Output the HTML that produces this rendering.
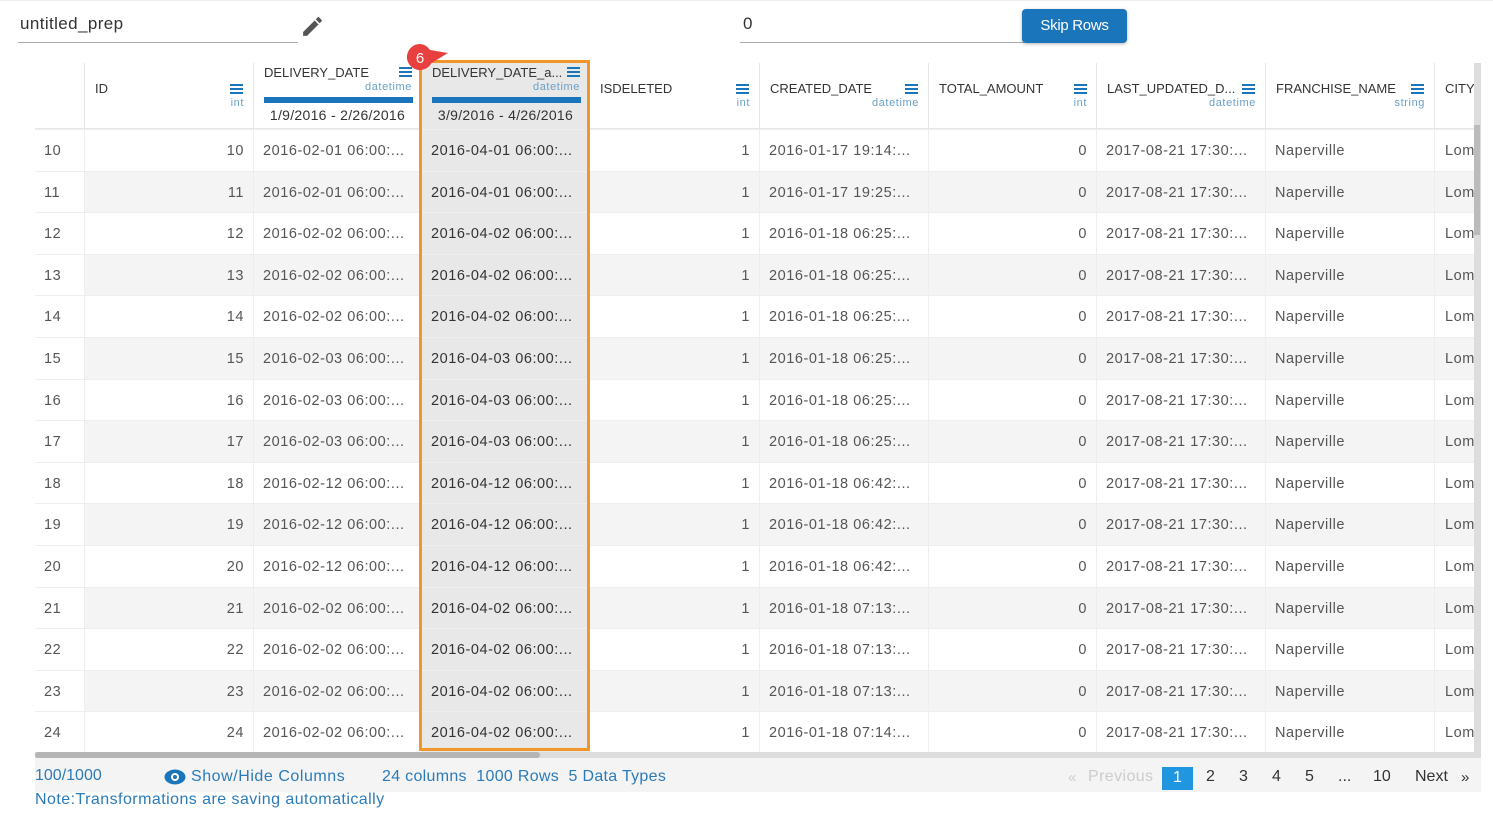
<!DOCTYPE html><html><head><style>
*{box-sizing:border-box;margin:0;padding:0}
body{width:1493px;height:820px;background:#fff;font-family:"Liberation Sans",sans-serif;position:relative;overflow:hidden;color:#555}
.a{position:absolute}
.hd{position:absolute;top:63px;height:67px;border-right:1px solid #e6e6e6;background:#fff}
.hn{position:absolute;left:10px;top:2px;font-size:13px;color:#333;white-space:nowrap}
.ham{position:absolute;width:13px;height:10px;border-top:2px solid #1b75bb;border-bottom:2px solid #1b75bb}
.ham:after{content:"";position:absolute;left:0;right:0;top:2px;border-top:2px solid #1b75bb}
.ty{position:absolute;right:9px;font-size:11px;color:#6aa0c8;letter-spacing:.6px}
.row{position:absolute;left:35px;width:1440px;height:41.6px;border-bottom:1px solid #eee;font-size:14.5px;color:#555}
.c{position:absolute;top:0;height:100%;line-height:43px;border-right:1px solid #eee;white-space:nowrap;overflow:hidden;padding:0 9px;letter-spacing:.55px}
.r{text-align:right}
</style></head><body>
<div class="a" style="left:0;top:0;width:1493px;height:1px;background:#eee"></div>
<div class="a" style="left:20px;top:14px;font-size:17px;color:#333;letter-spacing:.4px">untitled_prep</div>
<div class="a" style="left:18px;top:42px;width:280px;height:1px;background:#aaa"></div>
<svg class="a" style="left:300px;top:14px" width="25" height="25" viewBox="0 0 24 24"><path fill="#555" d="M3 17.25V21h3.75L17.8 9.94l-3.75-3.75L3 17.25zM20.7 7.04a1 1 0 0 0 0-1.41l-2.34-2.34a1 1 0 0 0-1.41 0l-1.83 1.83 3.75 3.75 1.83-1.83z"/></svg>
<div class="a" style="left:743px;top:14px;font-size:17px;color:#333">0</div>
<div class="a" style="left:740px;top:42px;width:284px;height:1px;background:#aaa"></div>
<div class="a" style="left:1022px;top:9px;width:105px;height:34px;background:#1b75bb;border-radius:4px;color:#fff;font-size:15px;line-height:33px;text-align:center;box-shadow:0 1px 3px rgba(0,0,0,.3);letter-spacing:-.3px">Skip Rows</div>

<div class="a" style="left:35px;top:63px;width:1445px;height:690px;border:1px solid #e3e3e3;border-bottom:none"></div>
<div class="hd" style="left:35px;width:50px"></div>
<div class="hd" style="left:85px;width:169px"><div class="hn" style="top:18px">ID</div><div class="ham" style="left:145px;top:21px"></div><div class="ty" style="top:34px">int</div></div>
<div class="hd" style="left:254px;width:168px"><div class="hn">DELIVERY_DATE</div><div class="ham" style="left:145px;top:4px"></div><div class="ty" style="top:18px">datetime</div><div class="a" style="left:10px;top:34px;width:149px;height:6px;background:#1b75bb"></div><div class="a" style="left:0;width:100%;text-align:center;top:44px;font-size:14px;color:#333;letter-spacing:.3px">1/9/2016 - 2/26/2016</div></div>
<div class="hd" style="left:422px;width:168px;background:#e8e8e8"><div class="hn">DELIVERY_DATE_a...</div><div class="ham" style="left:145px;top:4px"></div><div class="ty" style="top:18px">datetime</div><div class="a" style="left:10px;top:34px;width:149px;height:6px;background:#1b75bb"></div><div class="a" style="left:0;width:100%;text-align:center;top:44px;font-size:14px;color:#333;letter-spacing:.3px">3/9/2016 - 4/26/2016</div></div>
<div class="hd" style="left:590px;width:170px"><div class="hn" style="top:18px">ISDELETED</div><div class="ham" style="left:146px;top:21px"></div><div class="ty" style="top:34px">int</div></div>
<div class="hd" style="left:760px;width:169px"><div class="hn" style="top:18px">CREATED_DATE</div><div class="ham" style="left:145px;top:21px"></div><div class="ty" style="top:34px">datetime</div></div>
<div class="hd" style="left:929px;width:168px"><div class="hn" style="top:18px">TOTAL_AMOUNT</div><div class="ham" style="left:145px;top:21px"></div><div class="ty" style="top:34px">int</div></div>
<div class="hd" style="left:1097px;width:169px"><div class="hn" style="top:18px">LAST_UPDATED_D...</div><div class="ham" style="left:145px;top:21px"></div><div class="ty" style="top:34px">datetime</div></div>
<div class="hd" style="left:1266px;width:169px"><div class="hn" style="top:18px">FRANCHISE_NAME</div><div class="ham" style="left:145px;top:21px"></div><div class="ty" style="top:34px">string</div></div>
<div class="hd" style="left:1435px;width:40px;overflow:hidden"><div class="hn" style="top:18px">CITY</div></div>
<div class="a" style="left:35px;top:128px;width:1440px;height:4px;background:linear-gradient(#e4e4e4,#fff)"></div>

<div id="rows"></div>
<script>
var d=[[10,"02-01","04-01","17 19:14"],[11,"02-01","04-01","17 19:25"],[12,"02-02","04-02","18 06:25"],[13,"02-02","04-02","18 06:25"],[14,"02-02","04-02","18 06:25"],[15,"02-03","04-03","18 06:25"],[16,"02-03","04-03","18 06:25"],[17,"02-03","04-03","18 06:25"],[18,"02-12","04-12","18 06:42"],[19,"02-12","04-12","18 06:42"],[20,"02-12","04-12","18 06:42"],[21,"02-02","04-02","18 07:13"],[22,"02-02","04-02","18 07:13"],[23,"02-02","04-02","18 07:13"],[24,"02-02","04-02","18 07:14"]];
var h="";d.forEach(function(r,i){var bg=i%2?"#f4f4f4":"#fff";
h+='<div class="row" style="top:'+(130+i*41.6)+'px;background:'+bg+'">'+
'<div class="c" style="left:0;width:50px;background:#fff">'+r[0]+'</div>'+
'<div class="c r" style="left:50px;width:169px">'+r[0]+'</div>'+
'<div class="c" style="left:219px;width:168px">2016-'+r[1]+' 06:00:...</div>'+
'<div class="c" style="left:387px;width:168px;background:#e8e8e8;color:#333">2016-'+r[2]+' 06:00:...</div>'+
'<div class="c r" style="left:555px;width:170px">1</div>'+
'<div class="c" style="left:725px;width:169px">2016-01-'+r[3]+':...</div>'+
'<div class="c r" style="left:894px;width:168px">0</div>'+
'<div class="c" style="left:1062px;width:169px">2017-08-21 17:30:...</div>'+
'<div class="c" style="left:1231px;width:169px">Naperville</div>'+
'<div class="c" style="left:1400px;width:40px;padding-left:10px">Lom</div></div>';});
document.getElementById("rows").innerHTML=h;
</script>
<div class="a" style="left:1474px;top:63px;width:7px;height:693px;background:#ddd"></div>
<div class="a" style="left:1474px;top:125px;width:6px;height:110px;background:#bbb"></div>
<div class="a" style="left:35px;top:752px;width:1446px;height:6px;background:#ddd"></div>
<div class="a" style="left:35px;top:752px;width:505px;height:6px;background:#b5b5b5;border-radius:3px"></div>
<div class="a" style="left:419px;top:60px;width:171px;height:691px;border:3px solid #f0962a"></div>
<svg class="a" style="left:404px;top:42px" width="46" height="30" viewBox="0 0 46 30"><path fill="#e8403f" d="M16 2a13 13 0 1 0 11.5 19L44 11 26 8A13 13 0 0 0 16 2z"/><text x="16" y="21" text-anchor="middle" fill="#fff" font-family="Liberation Sans" font-size="15">6</text></svg>
<div class="a" style="left:35px;top:758px;width:1446px;height:34px;background:#f4f4f4"></div>
<div class="a" style="left:35px;top:767px;font-size:16px;color:#2b7bb9">100/1000</div>
<svg class="a" style="left:164px;top:769px" width="22" height="16" viewBox="0 0 22 16"><ellipse cx="11" cy="8" rx="10.5" ry="7.5" fill="#1b75bb"/><circle cx="11" cy="8" r="4" fill="#fff"/><circle cx="11" cy="8" r="2" fill="#1b75bb"/></svg>
<div class="a" style="left:191px;top:768px;font-size:16px;color:#2b7bb9;letter-spacing:.55px">Show/Hide Columns</div>
<div class="a" style="left:382px;top:768px;font-size:16px;color:#2b7bb9;letter-spacing:.3px">24 columns&nbsp; 1000 Rows&nbsp; 5 Data Types</div>
<div class="a" style="left:35px;top:791px;font-size:16px;color:#2b7bb9;letter-spacing:.45px">Note:Transformations are saving automatically</div>
<div class="a" style="left:1068px;top:769px;font-size:15px;color:#ccc">«</div>
<div class="a" style="left:1088px;top:768px;font-size:16px;color:#ccc;letter-spacing:.4px">Previous</div>
<div class="a" style="left:1162px;top:767px;width:31px;height:23px;background:#2196e0;color:#fff;font-size:16px;text-align:center;line-height:21px">1</div>
<div class="a" style="left:1206px;top:768px;font-size:16px;color:#333">2</div>
<div class="a" style="left:1239px;top:768px;font-size:16px;color:#333">3</div>
<div class="a" style="left:1272px;top:768px;font-size:16px;color:#333">4</div>
<div class="a" style="left:1305px;top:768px;font-size:16px;color:#333">5</div>
<div class="a" style="left:1338px;top:768px;font-size:16px;color:#333">...</div>
<div class="a" style="left:1373px;top:768px;font-size:16px;color:#333">10</div>
<div class="a" style="left:1415px;top:768px;font-size:16px;color:#333">Next</div>
<div class="a" style="left:1461px;top:769px;font-size:15px;color:#333">»</div>
</body></html>
